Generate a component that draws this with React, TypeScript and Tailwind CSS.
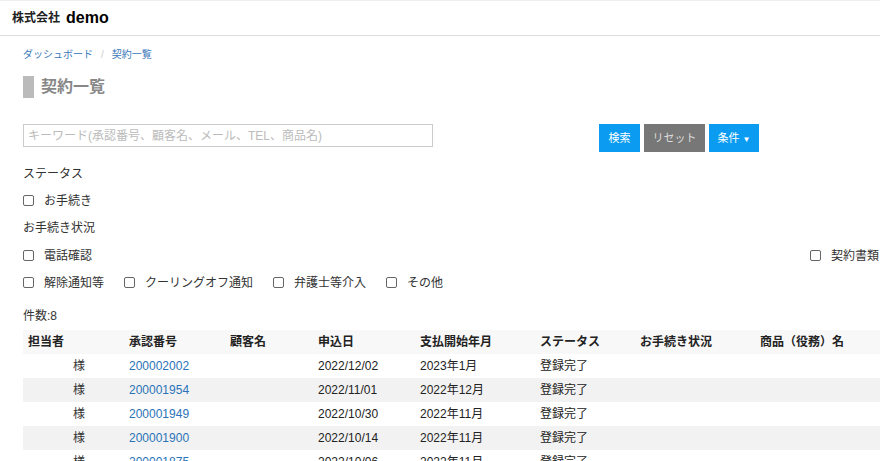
import React from "react";

interface Contract {
  no: string;
  applied: string;
  payStart: string;
  status: string;
}

const contracts: Contract[] = [
  { no: "200002002", applied: "2022/12/02", payStart: "2023年1月", status: "登録完了" },
  { no: "200001954", applied: "2022/11/01", payStart: "2022年12月", status: "登録完了" },
  { no: "200001949", applied: "2022/10/30", payStart: "2022年11月", status: "登録完了" },
  { no: "200001900", applied: "2022/10/14", payStart: "2022年11月", status: "登録完了" },
  { no: "200001875", applied: "2022/10/06", payStart: "2022年11月", status: "登録完了" },
  { no: "200001860", applied: "2022/10/01", payStart: "2022年11月", status: "登録完了" },
];

function Check({ label, className = "" }: { label: string; className?: string }) {
  return (
    <label className={`flex items-center gap-[10px] ${className}`}>
      <span className="w-[11px] h-[11px] border border-[#666] rounded-[2px] bg-white" />
      <span>{label}</span>
    </label>
  );
}

export default function App() {
  return (
    <div
      className="w-[880px] h-[461px] overflow-hidden bg-white text-[12px] text-[#333]"
      style={{ fontFamily: '"Liberation Sans", "Noto Sans CJK JP", sans-serif' }}
    >
      {/* Header */}
      <header className="h-[36px] border-t border-t-[#eee] border-b border-b-[#ddd] flex items-center px-[12px] gap-[6px]">
        <span className="text-[12px] font-bold text-[#222]">株式会社</span>
        <span className="text-[16px] font-bold text-black">demo</span>
      </header>

      <main className="px-[23px]">
        {/* Breadcrumb */}
        <nav className="h-[36px] flex items-center gap-[8px] text-[10px] pt-[1px]">
          <span className="text-[#3a78b8]">ダッシュボード</span>
          <span className="text-[#ccc]">/</span>
          <span className="text-[#3a78b8]">契約一覧</span>
        </nav>

        {/* Title */}
        <div className="flex items-center gap-[7px] h-[22px] mt-[4px]">
          <span className="w-[11px] h-[22px] bg-[#bbb]" />
          <h1 className="text-[16px] font-bold text-[#888]">契約一覧</h1>
        </div>

        {/* Search row */}
        <div className="flex items-start mt-[26px]">
          <input
            className="w-[410px] h-[23px] border border-[#ccc] px-[4px] text-[12px] outline-none placeholder:text-[#bbb]"
            placeholder="キーワード(承認番号、顧客名、メール、TEL、商品名)"
          />
          <div className="flex gap-[4px] ml-[166px]">
            <button className="w-[41px] h-[28px] bg-[#0b9cf1] text-white text-[11px]">検索</button>
            <button className="w-[61px] h-[28px] bg-[#777] text-[#ddd] text-[11px]">リセット</button>
            <button className="w-[50px] h-[28px] bg-[#0b9cf1] text-white text-[11px]">
              条件 <span className="text-[8px]">▼</span>
            </button>
          </div>
        </div>

        {/* Filters */}
        <div className="mt-[9px] flex flex-col">
          <div className="h-[26px] flex items-center">ステータス</div>
          <div className="h-[27px] flex items-center">
            <Check label="お手続き" />
          </div>
          <div className="h-[28px] flex items-center">お手続き状況</div>
          <div className="h-[27px] flex items-center justify-between">
            <Check label="電話確認" />
            <Check label="契約書類" className="mr-[-22px]" />
          </div>
          <div className="h-[27px] flex items-center gap-[20px]">
            <Check label="解除通知等" />
            <Check label="クーリングオフ通知" />
            <Check label="弁護士等介入" />
            <Check label="その他" />
          </div>
        </div>

        <div className="mt-[10px] h-[20px] flex items-center">件数:8</div>

        {/* Table */}
        <table className="mt-[4px] border-collapse table-fixed w-[900px] text-left">
          <colgroup>
            <col className="w-[101px]" />
            <col className="w-[101px]" />
            <col className="w-[88px]" />
            <col className="w-[102px]" />
            <col className="w-[120px]" />
            <col className="w-[100px]" />
            <col className="w-[120px]" />
            <col className="w-[168px]" />
          </colgroup>
          <thead>
            <tr className="h-[24px] bg-[#f8f8f8] font-bold text-[#222]">
              <th className="px-[5px]">担当者</th>
              <th className="px-[5px]">承認番号</th>
              <th className="px-[5px]">顧客名</th>
              <th className="px-[5px]">申込日</th>
              <th className="px-[5px]">支払開始年月</th>
              <th className="px-[5px]">ステータス</th>
              <th className="px-[5px]">お手続き状況</th>
              <th className="px-[5px]">商品（役務）名</th>
            </tr>
          </thead>
          <tbody>
            {contracts.map((c, i) => (
              <tr key={c.no} className={`h-[24px] ${i % 2 === 1 ? "bg-[#f2f2f2]" : "bg-white"}`}>
                <td className="px-[5px] pl-[50px]">様</td>
                <td className="px-[5px] text-[#2a73b8]">{c.no}</td>
                <td className="px-[5px]"></td>
                <td className="px-[5px] text-[#222]">{c.applied}</td>
                <td className="px-[5px] text-[#222]">{c.payStart}</td>
                <td className="px-[5px] text-[#222]">{c.status}</td>
                <td className="px-[5px]"></td>
                <td className="px-[5px]"></td>
              </tr>
            ))}
          </tbody>
        </table>
      </main>
    </div>
  );
}
